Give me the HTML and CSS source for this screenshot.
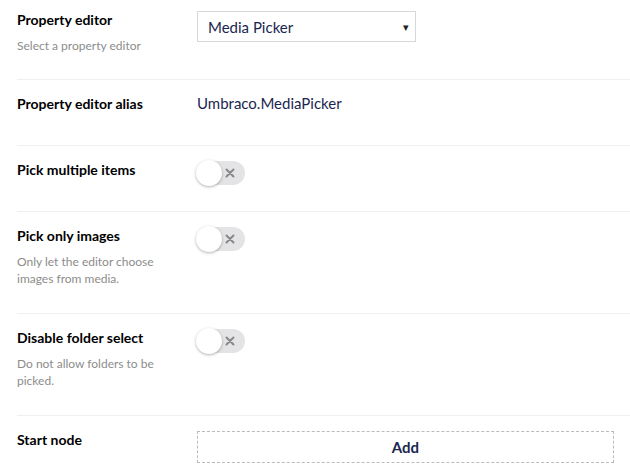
FILE: index.html
```html
<!DOCTYPE html>
<html>
<head>
<meta charset="utf-8">
<link rel="stylesheet" href="styles.css">
</head>
<body>
<div class="page">
  <div class="row first">
    <div class="label-col">
      <div class="label">Property editor</div>
      <div class="desc">Select a property editor</div>
    </div>
    <div class="control-col">
      <div class="select"><span>Media Picker</span><span class="caret">&#9662;</span></div>
    </div>
  </div>
  <div class="row alias">
    <div class="label-col"><div class="label">Property editor alias</div></div>
    <div class="control-col"><div class="value">Umbraco.MediaPicker</div></div>
  </div>
  <div class="row">
    <div class="label-col"><div class="label">Pick multiple items</div></div>
    <div class="control-col">
      <div class="toggle"><span class="knob"></span><svg class="x" width="10" height="10" viewBox="0 0 10 10"><path d="M1.5 1.5L8.5 8.5M8.5 1.5L1.5 8.5" stroke="#888" stroke-width="2" stroke-linecap="round"/></svg></div>
    </div>
  </div>
  <div class="row">
    <div class="label-col">
      <div class="label">Pick only images</div>
      <div class="desc">Only let the editor choose<br>images from media.</div>
    </div>
    <div class="control-col">
      <div class="toggle"><span class="knob"></span><svg class="x" width="10" height="10" viewBox="0 0 10 10"><path d="M1.5 1.5L8.5 8.5M8.5 1.5L1.5 8.5" stroke="#888" stroke-width="2" stroke-linecap="round"/></svg></div>
    </div>
  </div>
  <div class="row">
    <div class="label-col">
      <div class="label">Disable folder select</div>
      <div class="desc">Do not allow folders to be<br>picked.</div>
    </div>
    <div class="control-col">
      <div class="toggle"><span class="knob"></span><svg class="x" width="10" height="10" viewBox="0 0 10 10"><path d="M1.5 1.5L8.5 8.5M8.5 1.5L1.5 8.5" stroke="#888" stroke-width="2" stroke-linecap="round"/></svg></div>
    </div>
  </div>
  <div class="row last">
    <div class="label-col"><div class="label">Start node</div></div>
    <div class="control-col">
      <div class="add">Add</div>
    </div>
  </div>
</div>
</body>
</html>
```
FILE: styles.css
```css
html, body {
  margin: 0;
  padding: 0;
  background: #fff;
}
body {
  font-family: Lato, "Open Sans", sans-serif;
  color: #000;
  overflow: hidden;
}
.page {
  padding-left: 17px;
}
.row {
  display: grid;
  grid-template-columns: 180px 1fr;
  padding: 14px 0 26px;
  border-bottom: 1px solid #f0f0f2;
}
.row.first {
  padding: 10px 0 25px;
}
.row.last {
  border-bottom: none;
}
.label {
  font-weight: 700;
  font-size: 14px;
  line-height: 20px;
}
.desc {
  margin-top: 7px;
  font-size: 12px;
  line-height: 17px;
  color: #8c8c8c;
}
.control-col {
  padding-top: 1px;
  padding-right: 16px;
}
.select {
  width: 219px;
  height: 31px;
  box-sizing: border-box;
  border: 1px solid #d8d7d9;
  display: flex;
  align-items: center;
  justify-content: space-between;
  padding: 0 6px 0 10px;
  font-size: 15px;
  color: #1b264f;
}
.caret {
  font-size: 11px;
  color: #222;
}
.value {
  font-size: 15px;
  line-height: 19px;
  color: #1b264f;
  height: 25px;
}
.alias .control-col {
  padding-top: 0;
}
.toggle {
  position: relative;
  width: 48px;
  height: 24px;
  border-radius: 12px;
  background: #e4e4e6;
  display: flex;
  align-items: center;
  justify-content: flex-end;
  padding-right: 10px;
  box-sizing: border-box;
}
.knob {
  position: absolute;
  left: -1px;
  top: -1px;
  width: 26px;
  height: 26px;
  border-radius: 50%;
  background: #fff;
  box-shadow: 0 1px 3px rgba(0,0,0,0.3);
}
.x {
  display: block;
}
.add {
  height: 32px;
  box-sizing: border-box;
  border: 1px dashed #bbbbbb;
  display: flex;
  align-items: center;
  justify-content: center;
  font-size: 15px;
  font-weight: 700;
  color: #1b264f;
}
```
